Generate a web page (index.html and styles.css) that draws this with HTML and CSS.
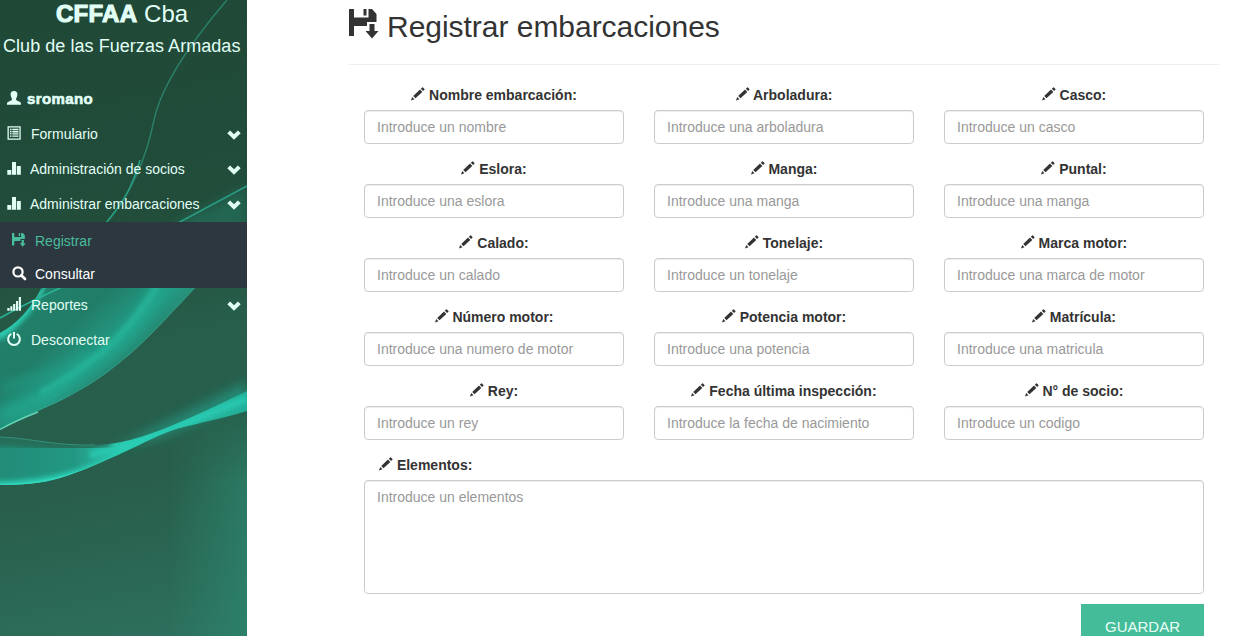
FILE: index.html
```html
<!DOCTYPE html>
<html lang="es">
<head>
<meta charset="utf-8">
<title>Registrar embarcaciones</title>
<link rel="stylesheet" href="styles.css">
</head>
<body>
<svg class="sprite" aria-hidden="true">
  <symbol id="pencil" viewBox="0 0 14 14"><path d="M0 13.500 1.200 10 3.500 12.300ZM2.200 9 9 2.600 11.300 4.900 4.500 11.300ZM9.800 1.800 11.200.5Q11.600.2 12 .6L13.400 2Q13.800 2.400 13.400 2.800L12.100 4.100Z"/></symbol>
  <symbol id="save" viewBox="0 0 30 30"><path d="M0 0H5V8.500H19.500V0H23L27.500 5V13H18V17H5V27H0ZM14.500 0H17.500V6.500H14.500ZM20.500 15H25.500V22H29.500L23 29.500 16.500 22H20.500Z"/></symbol>
  <symbol id="chevron" viewBox="0 0 14 10"><path d="M.3 3.300 3.100.6 7 4.300 10.900.6 13.700 3.300 7 9.700Z"/></symbol>
  <symbol id="bars" viewBox="0 0 14 14"><path d="M.3 9H4.300V13.700H.3ZM5 1H9V13.700H5ZM9.800 5H13.800V13.700H9.800Z"/></symbol>
</svg>
<div class="layout">
  <aside class="sidebar">
    <svg class="waves" viewBox="0 0 247 636" preserveAspectRatio="none" aria-hidden="true">
      <defs>
        <linearGradient id="base" gradientUnits="userSpaceOnUse" x1="60" y1="0" x2="190" y2="636"><stop offset="0" stop-color="#204837"/><stop offset=".35" stop-color="#224d3b"/><stop offset=".55" stop-color="#275f4c"/><stop offset=".75" stop-color="#285e4b"/><stop offset="1" stop-color="#2d705d"/></linearGradient>
        <linearGradient id="edge"><stop offset=".68" stop-color="#2c8a72" stop-opacity="0"/><stop offset="1" stop-color="#2c8a72" stop-opacity=".6"/></linearGradient>
        <linearGradient id="fade" x1="0" y1="0" x2="0" y2="1"><stop offset="0" stop-color="#000"/><stop offset=".35" stop-color="#fff"/></linearGradient>
        <mask id="edgeMask"><rect y="400" width="247" height="236" fill="url(#fade)"/></mask>
        <linearGradient id="big" gradientUnits="userSpaceOnUse" x1="20" y1="290" x2="110" y2="390"><stop offset="0" stop-color="#22806a"/><stop offset=".45" stop-color="#217d68"/><stop offset=".75" stop-color="#249b84"/><stop offset="1" stop-color="#28806a"/></linearGradient>
        <linearGradient id="low" gradientUnits="userSpaceOnUse" x1="0" y1="0" x2="247" y2="0"><stop offset="0" stop-color="#238c77"/><stop offset=".3" stop-color="#249883"/><stop offset=".5" stop-color="#29c5ad"/><stop offset="1" stop-color="#24ae98"/></linearGradient>
        <filter id="soft" x="-20%" y="-50%" width="140%" height="200%"><feGaussianBlur stdDeviation="6"/></filter>
        <filter id="fine" x="-20%" y="-50%" width="140%" height="200%"><feGaussianBlur stdDeviation="2.500"/></filter>
        <filter id="hair" x="-10%" y="-20%" width="120%" height="140%"><feGaussianBlur stdDeviation=".6"/></filter>
        <clipPath id="bigClip"><path id="bigShape" d="M42 287H196C160 325 130 361 82 389 54 406 20 417 0 430V333Q26 319 42 287Z"/></clipPath>
        <clipPath id="lowClip"><path id="lowShape" d="M0 437C30 438 55 446 95 445 140 445 200 413 247 391V411C220 419 190 425 176 429 146 439 110 462 60 478 40 484 20 485 0 485Z"/></clipPath>
      </defs>
      <rect width="247" height="636" fill="url(#base)"/>
      <rect y="400" width="247" height="236" fill="url(#edge)" mask="url(#edgeMask)"/>
      <path d="M247 187 178 223 170 235H247Z" fill="#20745f" opacity=".6" filter="url(#soft)"/>
      <path d="M227 0C180 55 160 92 154 120 146 160 130 195 106 223" fill="none" stroke="#29806a" stroke-width="1.400" filter="url(#hair)"/>
      <path d="M140 160C130 195 119 207 106 223M247 186 178 223" fill="none" stroke="#299b82" stroke-width="1.600" filter="url(#hair)"/>
      <use href="#bigShape" fill="url(#big)"/>
      <g clip-path="url(#bigClip)" fill="none">
        <path d="M165 280C145 305 139 330 101 357 65 385 30 405 0 415" stroke="#20b298" stroke-width="12" opacity=".65" filter="url(#soft)"/>
        <path d="M160 280C137 320 110 355 40 393" stroke="#2bc0a6" stroke-width="5" opacity=".65" filter="url(#fine)"/>
        <path d="M90 354Q60 375 0 388" stroke="#25b299" stroke-width="7" opacity=".5" filter="url(#soft)"/>
        <path d="M40 288Q26 317 -3 337" stroke="#2bcdb3" stroke-width="9" filter="url(#fine)"/>
        <path d="M196 287C160 325 130 361 82 389 54 406 20 417 0 430" stroke="#43ad91" stroke-width="1.200" opacity=".7"/>
      </g>
      <path d="M0 318Q25 304 62 287M34 302 46 287" fill="none" stroke="#2bb196" stroke-width="1.700" filter="url(#hair)"/>
      <path d="M0 429.500Q15 421 38 412" fill="none" stroke="#62d6b7" stroke-width="1.400" filter="url(#hair)"/>
      <path d="M247 382Q190 412 110 449L160 437 247 400Z" fill="#22a48d" opacity=".7" filter="url(#soft)"/>
      <use href="#lowShape" fill="url(#low)" filter="url(#hair)"/>
      <g clip-path="url(#lowClip)" fill="none">
        <path d="M-5 440C30 440 60 449 110 443" stroke="#286853" stroke-width="12" opacity=".85" filter="url(#fine)"/>
        <path d="M-5 485C65 485 110 462 145 443" stroke="#2bd1b6" stroke-width="7" filter="url(#fine)"/>
        <path d="M90 455C150 442 185 421 247 399" stroke="#2cd0b7" stroke-width="7" opacity=".8" filter="url(#fine)"/>
        <path d="M0 485C65 485 110 460 150 441" stroke="#32d5ba" stroke-width="2" filter="url(#hair)"/>
      </g>
      <path d="M0 437C30 438 55 446 95 445" fill="none" stroke="#348f78" stroke-width="1"/>
    </svg>
    <div class="brand"><strong>CFFAA</strong> Cba</div>
    <div class="club">Club de las Fuerzas Armadas</div>
    <nav class="menu">
      <div class="item user"><svg viewBox="0 0 14 14"><path d="M7 0C4.600 0 3.400 1.500 3.600 4 3.800 6 5 7 5 8.500 4.600 10 0 10.500 0 12.500V13.700H14V12.500C14 10.500 9.400 10 9 8.500 9 7 10.200 6 10.400 4 10.600 1.500 9.400 0 7 0Z"/></svg><span>sromano</span></div>
      <div class="item"><svg viewBox="0 0 14 14"><path fill-rule="evenodd" d="M.5.2H13.700V13.800H.5ZM1.800 1.500V12.500H12.400V1.500ZM3 2.800H4.500V4.200H3ZM5.300 2.800H11.500V4.200H5.300ZM3 5H4.500V6.400H3ZM5.300 5H11.500V6.400H5.300ZM3 7.200H4.500V8.600H3ZM5.300 7.200H11.500V8.600H5.300ZM3 9.400H4.500V10.800H3ZM5.300 9.400H11.500V10.800H5.300Z"/></svg><span>Formulario</span><svg class="chevron"><use href="#chevron"/></svg></div>
      <div class="item stats"><svg><use href="#bars"/></svg><span>Administración de socios</span><svg class="chevron"><use href="#chevron"/></svg></div>
      <div class="item stats"><svg><use href="#bars"/></svg><span>Administrar embarcaciones</span><svg class="chevron"><use href="#chevron"/></svg></div>
      <div class="submenu">
        <div class="subitem active"><svg><use href="#save"/></svg><span>Registrar</span></div>
        <div class="subitem"><svg viewBox="0 0 14 14"><circle cx="6" cy="5.900" r="4.600" fill="none" stroke="currentColor" stroke-width="2.200"/><path d="M9.300 9.300 13 13" stroke="currentColor" stroke-width="2.700" stroke-linecap="round"/></svg><span>Consultar</span></div>
      </div>
      <div class="item"><svg viewBox="0 0 14 14"><path d="M.3 11H2.600V13.700H.3ZM3.300 9.300H5.400V13.700H3.300ZM6.100 7H8.300V13.700H6.100ZM9 4H11.100V13.700H9ZM11.800 0H14V13.700H11.800Z"/></svg><span>Reportes</span><svg class="chevron"><use href="#chevron"/></svg></div>
      <div class="item"><svg viewBox="0 0 14 14"><path d="M4.300 1.900A5.900 5.900 0 1 0 9.700 1.900M7 0V6.500" fill="none" stroke="currentColor" stroke-width="2"/></svg><span>Desconectar</span></div>
    </nav>
  </aside>
  <main class="content">
    <h1><svg><use href="#save"/></svg><span>Registrar embarcaciones</span></h1>
    <form class="form">
      <div class="fields">
        <label><span><svg><use href="#pencil"/></svg> Nombre embarcación:</span><input placeholder="Introduce un nombre"></label>
        <label><span><svg><use href="#pencil"/></svg> Arboladura:</span><input placeholder="Introduce una arboladura"></label>
        <label><span><svg><use href="#pencil"/></svg> Casco:</span><input placeholder="Introduce un casco"></label>
        <label><span><svg><use href="#pencil"/></svg> Eslora:</span><input placeholder="Introduce una eslora"></label>
        <label><span><svg><use href="#pencil"/></svg> Manga:</span><input placeholder="Introduce una manga"></label>
        <label><span><svg><use href="#pencil"/></svg> Puntal:</span><input placeholder="Introduce una manga"></label>
        <label><span><svg><use href="#pencil"/></svg> Calado:</span><input placeholder="Introduce un calado"></label>
        <label><span><svg><use href="#pencil"/></svg> Tonelaje:</span><input placeholder="Introduce un tonelaje"></label>
        <label><span><svg><use href="#pencil"/></svg> Marca motor:</span><input placeholder="Introduce una marca de motor"></label>
        <label><span><svg><use href="#pencil"/></svg> Número motor:</span><input placeholder="Introduce una numero de motor"></label>
        <label><span><svg><use href="#pencil"/></svg> Potencia motor:</span><input placeholder="Introduce una potencia"></label>
        <label><span><svg><use href="#pencil"/></svg> Matrícula:</span><input placeholder="Introduce una matricula"></label>
        <label><span><svg><use href="#pencil"/></svg> Rey:</span><input placeholder="Introduce un rey"></label>
        <label><span><svg><use href="#pencil"/></svg> Fecha última inspección:</span><input placeholder="Introduce la fecha de nacimiento"></label>
        <label><span><svg><use href="#pencil"/></svg> N° de socio:</span><input placeholder="Introduce un codigo"></label>
        <label class="wide"><span><svg><use href="#pencil"/></svg> Elementos:</span><textarea placeholder="Introduce un elementos"></textarea></label>
      </div>
      <button type="button">GUARDAR</button>
    </form>
  </main>
</div>
</body>
</html>
```
FILE: styles.css
```css
* { box-sizing: border-box; }
body { margin: 0; overflow: hidden; background: #fff; color: #333; font: 14px/20px "Liberation Sans", Arial, sans-serif; }
svg { fill: currentColor; flex: none; overflow: visible; }
.sprite { position: absolute; width: 0; height: 0; }
.layout { display: flex; height: 636px; overflow: hidden; }
.sidebar { position: relative; isolation: isolate; width: 247px; flex: none; color: #e2fff6; overflow: hidden; }
.waves { position: absolute; inset: 0; width: 247px; height: 636px; z-index: -1; }
.brand { height: 33px; padding-right: 3px; font-size: 24px; line-height: 28px; text-align: center; white-space: nowrap; }
.brand strong { letter-spacing: .3px; -webkit-text-stroke: 1.1px currentColor; }
.club { height: 49px; padding-left: 3px; font-size: 18px; line-height: 26px; letter-spacing: .05px; white-space: nowrap; }
.item { display: flex; align-items: center; height: 35px; padding: 0 6px 2px 7px; }
.item > svg:first-child { width: 14px; height: 14px; margin: -1px 10px 0 0; }
.item.stats > svg:first-child { margin-right: 9px; }
.item.user > svg:first-child { margin-right: 6px; }
.user span { font-size: 15px; font-weight: bold; letter-spacing: .4px; -webkit-text-stroke: .6px currentColor; }
.item .chevron { width: 14px; height: 10px; margin: 2px 0 0 auto; }
.submenu { height: 66px; padding-top: 2px; background: #2c3740; color: #fff; }
.subitem { display: flex; align-items: center; gap: 9px; height: 33px; padding-left: 12px; }
.subitem svg { width: 14px; height: 14px; margin-top: -2px; }
.active { color: #48bd9b; }
.content { flex: 1; padding-left: 102px; }
h1 { display: flex; width: 870px; height: 65px; margin: 0; padding-top: 9px; border-bottom: 1px solid #eee; font-size: 30px; line-height: 36px; font-weight: normal; }
h1 svg { width: 30px; height: 30px; margin-right: 8px; }
h1 span { letter-spacing: -.03px; }
.form { width: 870px; padding: 20px 15px 0; }
.fields { display: grid; grid-template-columns: repeat(3, 260px); gap: 15px 30px; }
label { display: block; height: 59px; text-align: center; font-weight: bold; }
label > span { display: block; height: 25px; line-height: 20px; white-space: nowrap; }
label svg { width: 14px; height: 14px; vertical-align: -1px; }
input, textarea { display: block; width: 100%; height: 34px; padding: 6px 12px; border: 1px solid #ccc; border-radius: 4px; box-shadow: inset 0 1px 1px rgba(0, 0, 0, .075); background: #fff; font: 14px/20px "Liberation Sans", Arial, sans-serif; outline: 0; }
textarea { height: 114px; resize: none; }
::placeholder { color: #999; opacity: 1; }
.wide { grid-column: 1 / -1; height: 139px; text-align: left; }
.wide > span { padding-left: 15px; }
button { display: block; width: 123px; height: 45px; margin: 10px 0 0 auto; padding: 0; border: 0; background: #45bc99; color: #e9fff8; font: 15px/45px "Liberation Sans", Arial, sans-serif; }
```
